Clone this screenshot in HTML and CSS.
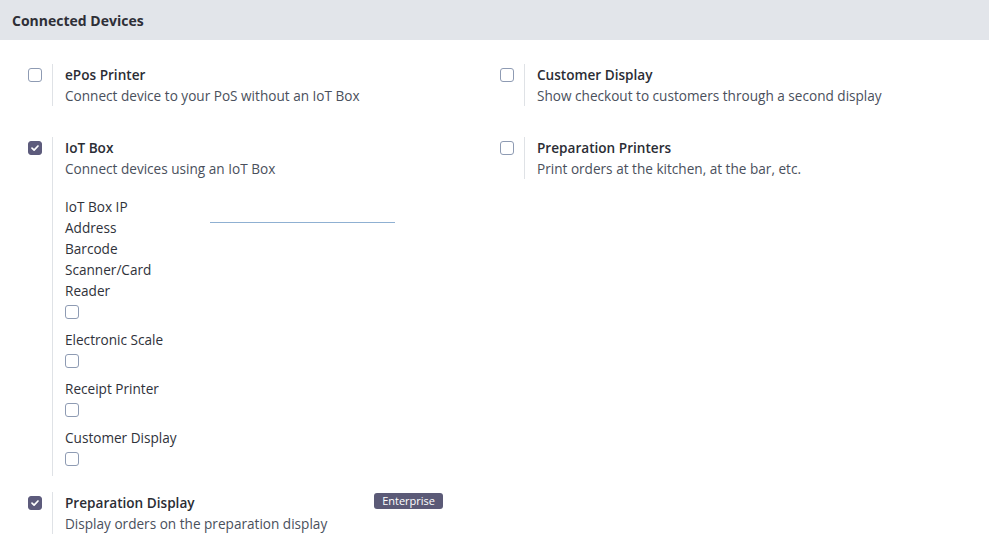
FILE: index.html
```html
<!DOCTYPE html>
<html lang="en">
<head>
<meta charset="utf-8">
<title>Connected Devices</title>
<link rel="stylesheet" href="styles.css">
</head>
<body>
<div class="section-title">Connected Devices</div>
<div class="settings">
  <div class="settings-row row-gap-large">
    <div class="setting">
      <span class="cb"></span>
      <div class="content">
        <div class="title">ePos Printer</div>
        <div class="desc">Connect device to your PoS without an IoT Box</div>
      </div>
    </div>
    <div class="setting">
      <span class="cb"></span>
      <div class="content">
        <div class="title">Customer Display</div>
        <div class="desc">Show checkout to customers through a second display</div>
      </div>
    </div>
  </div>

  <div class="settings-row row-gap-small">
    <div class="setting">
      <span class="cb checked"><svg viewBox="0 0 14 14" width="14" height="14"><path d="M4 7.2 L6.1 9.2 L10 5" fill="none" stroke="#fff" stroke-width="1.7" stroke-linecap="round" stroke-linejoin="round"/></svg></span>
      <div class="content">
        <div class="title">IoT Box</div>
        <div class="desc">Connect devices using an IoT Box</div>
        <div class="fields">
          <div class="field-ip">
            <label class="field-label">IoT Box IP Address</label>
            <span class="ip-input"></span>
          </div>
          <div class="field">
            <label class="field-label">Barcode Scanner/Card Reader</label>
            <div class="cb-wrap"><span class="cb"></span></div>
          </div>
          <div class="field">
            <label class="field-label">Electronic Scale</label>
            <div class="cb-wrap"><span class="cb"></span></div>
          </div>
          <div class="field">
            <label class="field-label">Receipt Printer</label>
            <div class="cb-wrap"><span class="cb"></span></div>
          </div>
          <div class="field">
            <label class="field-label">Customer Display</label>
            <div class="cb-wrap"><span class="cb"></span></div>
          </div>
        </div>
      </div>
    </div>
    <div class="setting">
      <span class="cb"></span>
      <div class="content">
        <div class="title">Preparation Printers</div>
        <div class="desc">Print orders at the kitchen, at the bar, etc.</div>
      </div>
    </div>
  </div>

  <div class="settings-row">
    <div class="setting">
      <span class="cb checked"><svg viewBox="0 0 14 14" width="14" height="14"><path d="M4 7.2 L6.1 9.2 L10 5" fill="none" stroke="#fff" stroke-width="1.7" stroke-linecap="round" stroke-linejoin="round"/></svg></span>
      <div class="content">
        <div class="title-row">
          <div class="title">Preparation Display</div>
          <span class="badge">Enterprise</span>
        </div>
        <div class="desc">Display orders on the preparation display</div>
      </div>
    </div>
  </div>
</div>
</body>
</html>
```

FILE: styles.css
```css
html, body {
  margin: 0;
  padding: 0;
  background: #ffffff;
}

body {
  font-family: "Open Sans", "Noto Sans", sans-serif;
  font-size: 13.6px;
  color: #454b57;
}

.section-title {
  height: 40px;
  background: #e2e5ea;
  padding-left: 12px;
  display: flex;
  align-items: center;
  font-weight: 700;
  font-size: 14px;
  color: #2e2f37;
}

.settings {
  padding: 24px 0 0 28px;
}

.settings-row {
  display: grid;
  grid-template-columns: 472px 1fr;
}

.row-gap-large {
  margin-bottom: 31px;
}

.row-gap-small {
  margin-bottom: 16.5px;
}

.setting {
  display: flex;
  align-items: flex-start;
}

.cb {
  box-sizing: border-box;
  width: 14px;
  height: 14px;
  border: 1px solid #8e9bb3;
  border-radius: 3px;
  background: #fff;
  margin-top: 4px;
  flex: 0 0 auto;
  display: block;
}

.cb.checked {
  border-color: #5d5b7c;
  background: #5d5b7c;
}

.cb.checked svg {
  display: block;
  margin: -1px;
}

.content {
  margin-left: 10px;
  border-left: 1px solid #dfe2e6;
  padding-left: 12px;
}

.title {
  font-weight: 600;
  line-height: 21px;
  color: #2b2d35;
}

.desc {
  line-height: 21px;
  color: #4a505c;
}

.title-row {
  width: 378px;
  display: flex;
  justify-content: space-between;
  align-items: flex-start;
}

.badge {
  margin-top: 0.5px;
  height: 16px;
  line-height: 16px;
  padding: 0 8px;
  border-radius: 3px;
  background: #5b5a77;
  color: #ffffff;
  font-size: 11px;
}

.fields {
  margin-top: 16.5px;
}

.field-ip {
  display: flex;
  align-items: flex-start;
}

.field-label {
  display: block;
  width: 114px;
  line-height: 21px;
  color: #2f323a;
}

.field-ip .field-label {
  flex: 0 0 114px;
}

.ip-input {
  display: block;
  margin-left: 31px;
  width: 185px;
  height: 26px;
  border-bottom: 1px solid #8fb0d2;
}

.cb-wrap {
  box-sizing: border-box;
  height: 21px;
  padding-top: 4px;
  margin-bottom: 7px;
}

.cb-wrap .cb {
  margin-top: 0;
}
```
